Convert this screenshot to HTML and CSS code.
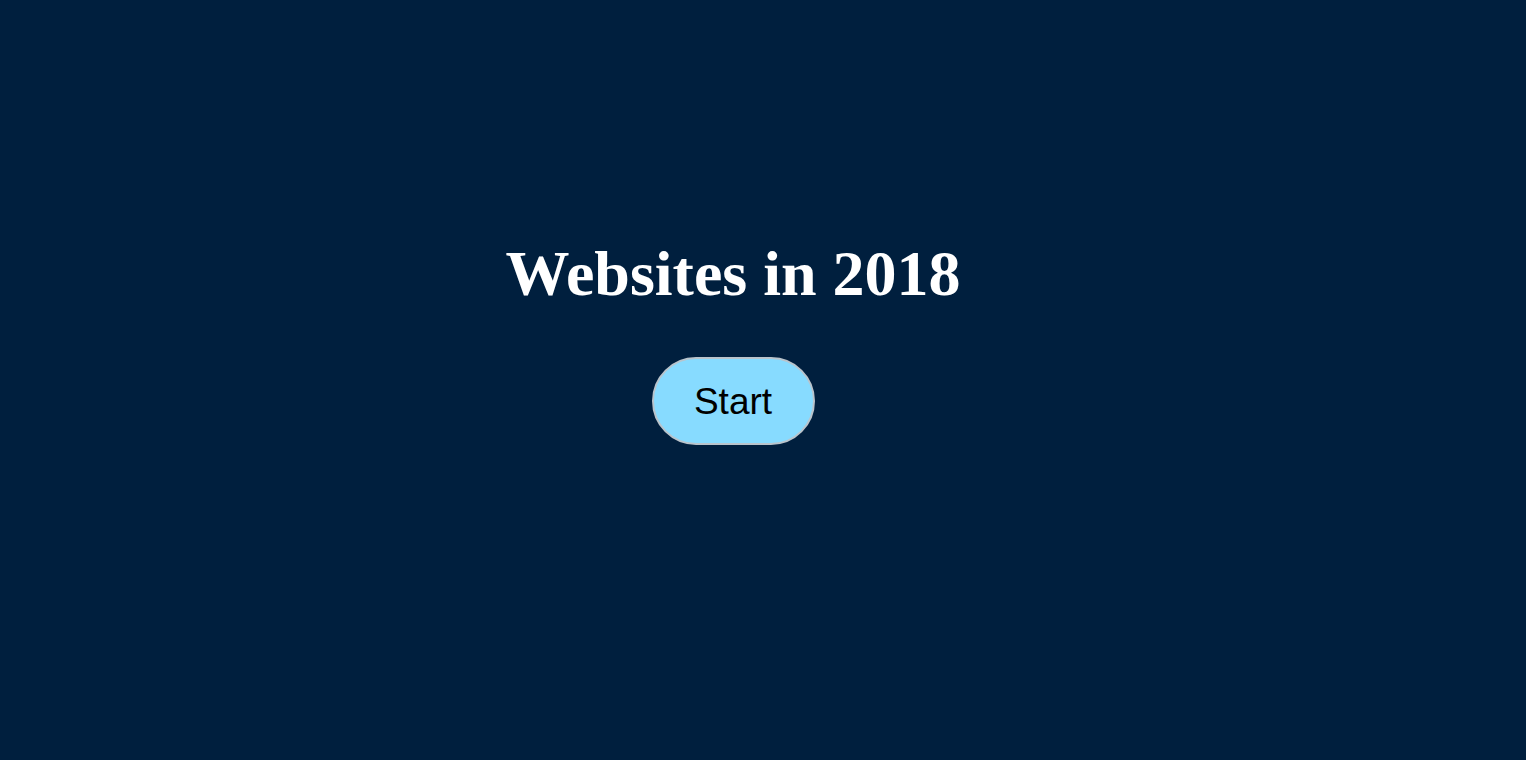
FILE: index.html
```html
<!DOCTYPE html>
<html lang="en">
<head>
    <meta charset="utf-8">
    <title>Websites in 2018</title>
    <link rel="stylesheet" href="styles.css">
</head>
<body>
<div class="intro">
    <h1 class="intro-title">Websites in 2018</h1>
    <button class="start-btn">Start</button>
</div>
</body>
</html>
```

FILE: styles.css
```css
html, body {
    margin: 0;
    height: 100%;
    background: #001f3e;
}
.intro {
    display: flex;
    flex-direction: column;
    align-items: center;
    box-sizing: border-box;
    height: 100%;
    padding: 236px 60px 0 0;
}
.intro-title {
    margin: 0;
    color: #fff;
    font-family: "Liberation Serif", "Times New Roman", serif;
    font-weight: bold;
    font-size: 64px;
    line-height: 76px;
}
.start-btn {
    margin-top: 45px;
    width: 163px;
    height: 88px;
    border: 2px solid #b9c4cc;
    border-radius: 44px;
    background: #87dbff;
    color: #000;
    font-family: "Liberation Sans", Arial, sans-serif;
    font-size: 37px;
    padding: 2px 0 0;
}
```
